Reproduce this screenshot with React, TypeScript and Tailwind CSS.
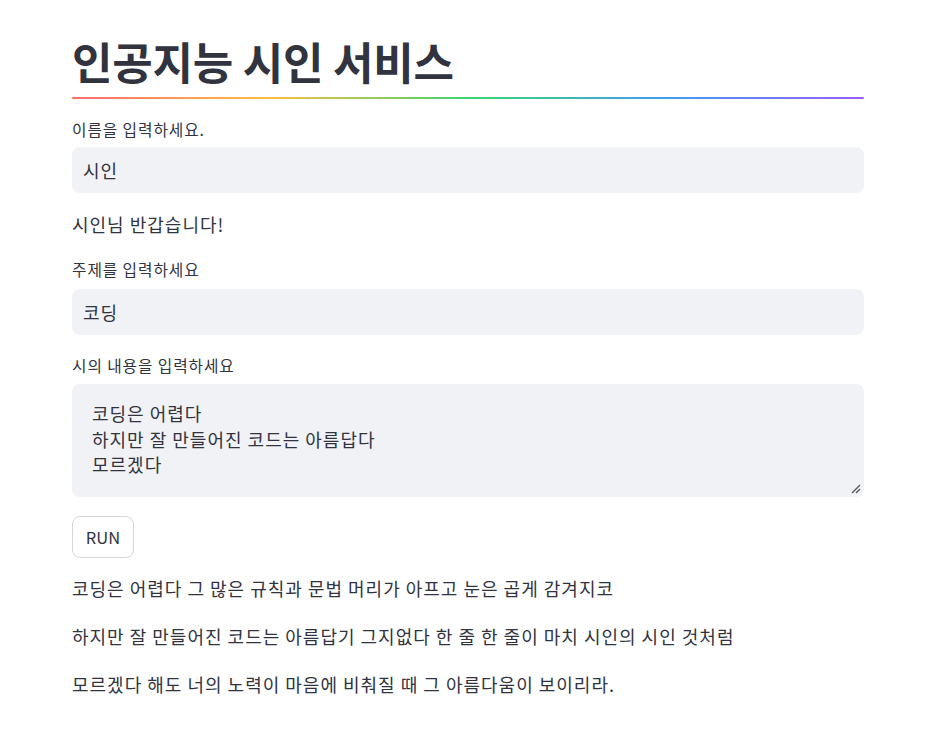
import React from "react";

const font = { fontFamily: '"Noto Sans CJK KR", "Noto Sans", sans-serif' };

export default function App() {
  return (
    <div className="min-h-[732px] w-full bg-white text-[#31333f]" style={font}>
      <div className="ml-[72px] w-[792px] flex flex-col pt-[35px]">
        <h1 className="text-[44px] font-bold leading-[53px] tracking-[-0.005em] text-[#31333f]">
          인공지능 시인 서비스
        </h1>
        <div className="mt-[9px] h-[2px] w-full rounded-[3px] bg-[linear-gradient(to_right,#ff6c6c,#ffbd45,#3dd56d,#3d9df3,#9a5dff)]" />

        <label className="mt-[21px] text-[15.75px] leading-[20px] tracking-[0.9px]">이름을 입력하세요.</label>
        <div className="mt-[7px] h-[46px] rounded-[8px] bg-[#f0f2f6] flex items-center px-[11px] text-[18px] tracking-[1px]">
          시인
        </div>

        <p className="mt-[17px] text-[18px] leading-[28px] tracking-[1px]">시인님 반갑습니다!</p>

        <label className="mt-[22px] text-[15.75px] leading-[20px] tracking-[0.9px]">주제를 입력하세요</label>
        <div className="mt-[9px] h-[46px] rounded-[8px] bg-[#f0f2f6] flex items-center px-[11px] text-[18px] tracking-[1px]">
          코딩
        </div>

        <label className="mt-[21px] text-[15.75px] leading-[20px] tracking-[0.9px]">시의 내용을 입력하세요</label>
        <div className="relative mt-[8px] h-[113px] rounded-[8px] bg-[#f0f2f6] px-[20px] pt-[17px] text-[18px] leading-[25.6px] tracking-[1px]">
          <div>코딩은 어렵다</div>
          <div>하지만 잘 만들어진 코드는 아름답다</div>
          <div>모르겠다</div>
          <svg className="absolute right-[3px] bottom-[3px]" width="10" height="10" viewBox="0 0 10 10">
            <line x1="1" y1="9" x2="9" y2="1" stroke="#555" strokeWidth="1.2" />
            <line x1="5" y1="9" x2="9" y2="5" stroke="#555" strokeWidth="1.2" />
          </svg>
        </div>

        <div className="mt-[19px]">
          <button className="h-[42px] w-[62px] rounded-[8px] border border-[#d6d6d9] bg-white text-[16.5px] text-[#31333f] flex items-center justify-center">
            RUN
          </button>
        </div>

        <p className="mt-[16px] text-[18px] leading-[28px] tracking-[1px]">
          코딩은 어렵다 그 많은 규칙과 문법 머리가 아프고 눈은 곱게 감겨지코
        </p>
        <p className="mt-[20px] text-[18px] leading-[28px] tracking-[1px]">
          하지만 잘 만들어진 코드는 아름답기 그지없다 한 줄 한 줄이 마치 시인의 시인 것처럼
        </p>
        <p className="mt-[20px] text-[18px] leading-[28px] tracking-[1px]">
          모르겠다 해도 너의 노력이 마음에 비춰질 때 그 아름다움이 보이리라.
        </p>
      </div>
    </div>
  );
}
